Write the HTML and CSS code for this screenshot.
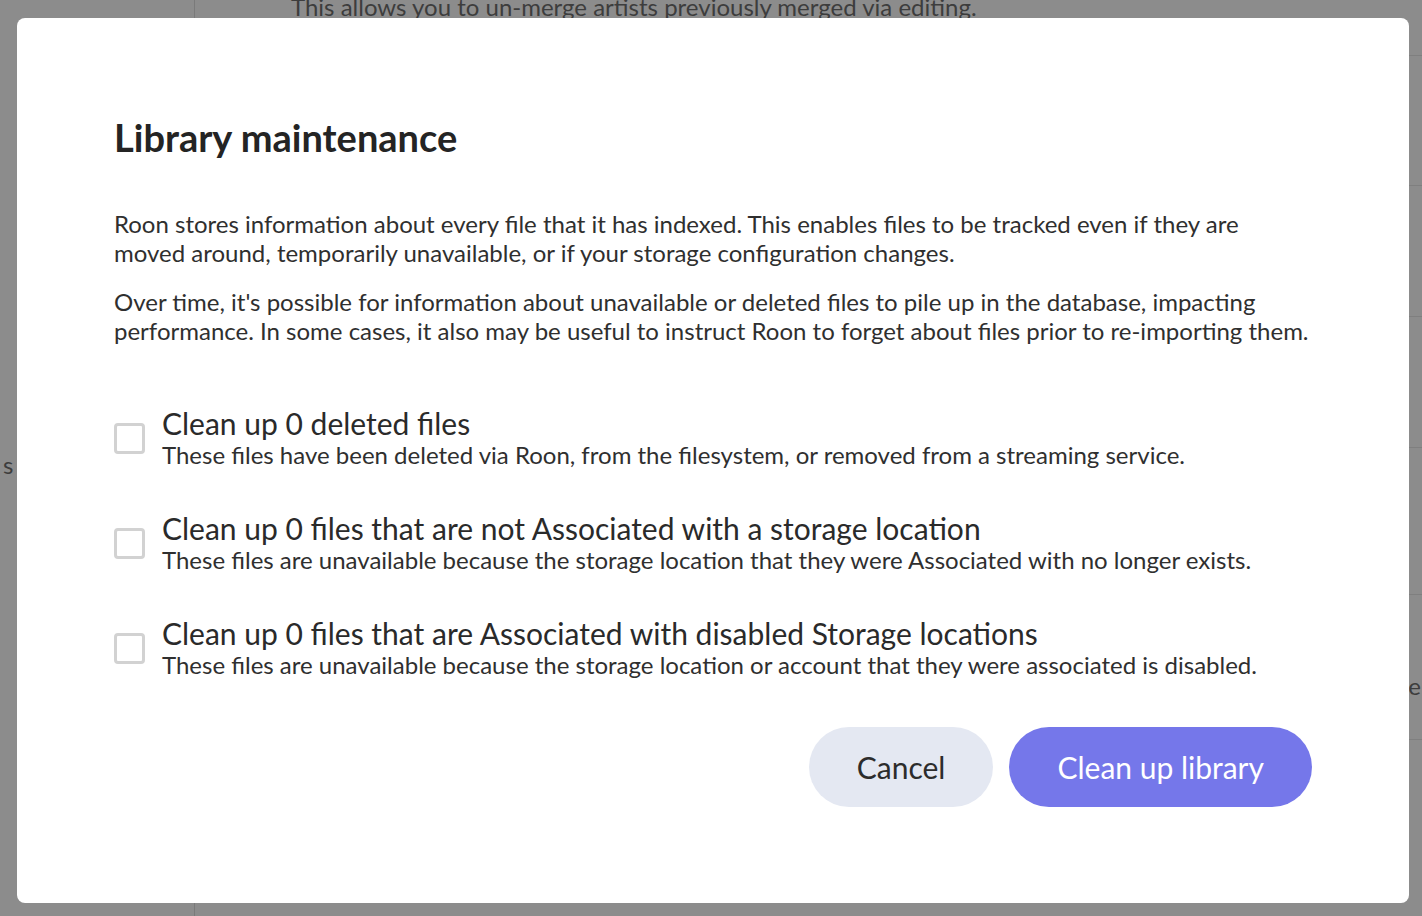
FILE: index.html
```html
<!DOCTYPE html>
<html lang="en">
<head>
<meta charset="utf-8">
<title>Library maintenance</title>
<link rel="stylesheet" href="styles.css">
</head>
<body>
<div class="page">
  <aside class="side">
    <div class="side-item">s</div>
  </aside>
  <main class="main">
    <div class="row row-top"><p class="top-text">This allows you to un-merge artists previously merged via editing.</p></div>
    <div class="row row-a"></div>
    <div class="row row-b"></div>
    <div class="row row-c"></div>
    <div class="row row-d"></div>
    <div class="row row-e"><span class="edge-text">e</span></div>
    <div class="row row-f"></div>
  </main>
</div>

<div class="modal" role="dialog" aria-labelledby="modal-title">
  <h1 class="modal-title" id="modal-title">Library maintenance</h1>
  <p class="modal-text">Roon stores information about every file that it has indexed. This enables files to be tracked even if they are moved around, temporarily unavailable, or if your storage configuration changes.</p>
  <p class="modal-text">Over time, it's possible for information about unavailable or deleted files to pile up in the database, impacting performance. In some cases, it also may be useful to instruct Roon to forget about files prior to re-importing them.</p>

  <ul class="options">
    <li class="option">
      <span class="checkbox"></span>
      <div class="option-body">
        <div class="option-label">Clean up 0 deleted files</div>
        <div class="option-desc">These files have been deleted via Roon, from the filesystem, or removed from a streaming service.</div>
      </div>
    </li>
    <li class="option">
      <span class="checkbox"></span>
      <div class="option-body">
        <div class="option-label">Clean up 0 files that are not Associated with a storage location</div>
        <div class="option-desc">These files are unavailable because the storage location that they were Associated with no longer exists.</div>
      </div>
    </li>
    <li class="option">
      <span class="checkbox"></span>
      <div class="option-body">
        <div class="option-label">Clean up 0 files that are Associated with disabled Storage locations</div>
        <div class="option-desc">These files are unavailable because the storage location or account that they were associated is disabled.</div>
      </div>
    </li>
  </ul>

  <div class="actions">
    <button class="btn btn-cancel" type="button">Cancel</button>
    <button class="btn btn-primary" type="button">Clean up library</button>
  </div>
</div>
</body>
</html>
```

FILE: styles.css
```css
html, body {
  margin: 0;
  padding: 0;
  height: 100%;
}

body {
  background: #8c8c8c;
  font-family: Lato, "Open Sans", "Liberation Sans", sans-serif;
  color: #2f2f2f;
  overflow: hidden;
}

.page {
  display: grid;
  grid-template-columns: 195px 1fr;
  height: 916px;
}

.side {
  border-right: 1px solid #7a7a7a;
  padding-top: 450px;
}

.side-item {
  padding-left: 3px;
  font-size: 24px;
  line-height: 30px;
  color: #3d3d3d;
}

.main {
  display: flex;
  flex-direction: column;
}

.row {
  border-bottom: 1px solid #7f7f7f;
  box-sizing: border-box;
}

.row-top { height: 56px; }
.row-a { height: 130px; }
.row-b { height: 131px; }
.row-c { height: 131px; }
.row-d { height: 147px; }
.row-e {
  height: 145px;
  display: flex;
  justify-content: flex-end;
  align-items: flex-start;
}
.row-f { flex: 1; border-bottom: none; }

.top-text {
  margin: -8px 0 0 96px;
  font-size: 24px;
  line-height: 30px;
  color: #3d3d3d;
}

.edge-text {
  margin-top: 76px;
  padding-right: 1px;
  font-size: 24px;
  line-height: 30px;
  color: #3d3d3d;
}

.modal {
  position: fixed;
  top: 18px;
  left: 17px;
  width: 1392px;
  box-sizing: border-box;
  padding: 95px 97px 96px;
  background: #ffffff;
  border-radius: 8px;
}

.modal-title {
  margin: 0 0 48px;
  font-size: 38px;
  line-height: 48px;
  font-weight: 700;
  color: #242424;
}

.modal-text {
  margin: 0 0 20px;
  font-size: 24px;
  line-height: 29px;
  color: #2f2f2f;
}

.options {
  list-style: none;
  margin: 61px 0 0;
  padding: 0;
  display: flex;
  flex-direction: column;
  gap: 41px;
}

.option {
  display: flex;
  align-items: center;
  gap: 17px;
}

.checkbox {
  flex: none;
  width: 31px;
  height: 31px;
  box-sizing: border-box;
  border: 3px solid #d2d2d2;
  border-radius: 4px;
  background: #fff;
}

.option-label {
  font-size: 30px;
  line-height: 34px;
  color: #2a2a2a;
}

.option-desc {
  font-size: 24px;
  line-height: 30px;
  color: #2f2f2f;
}

.actions {
  display: flex;
  justify-content: flex-end;
  gap: 16px;
  margin-top: 47px;
}

.btn {
  height: 80px;
  padding: 0 48px;
  border: none;
  border-radius: 40px;
  font-family: Lato, "Open Sans", "Liberation Sans", sans-serif;
  font-size: 30px;
  cursor: pointer;
}

.btn-cancel {
  background: #e4e8f2;
  color: #2c2c2c;
}

.btn-primary {
  background: #7577ea;
  color: #ffffff;
}
```
